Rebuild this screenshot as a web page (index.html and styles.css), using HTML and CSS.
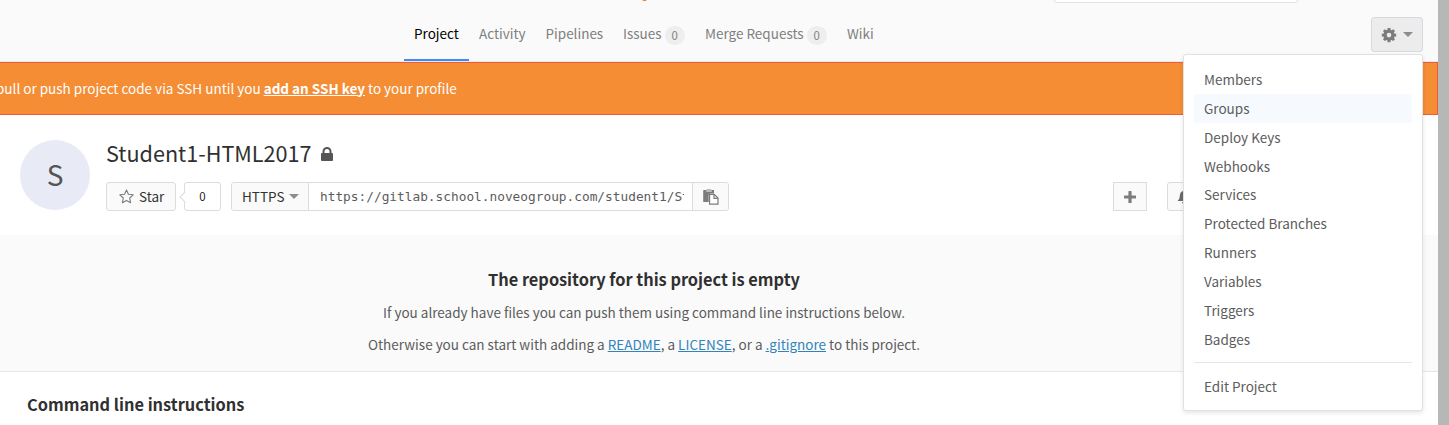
FILE: index.html
```
<!DOCTYPE html>
<html lang="en">
<head>
<meta charset="utf-8">
<title>Student1-HTML2017</title>
<link rel="stylesheet" href="styles.css">
</head>
<body>
<div class="page">
  <header class="header">
    <div class="search"></div>
    <div class="logo-tip"></div>
    <nav class="tabs">
      <a class="tab tab-project active">Project</a>
      <a class="tab tab-activity">Activity</a>
      <a class="tab tab-pipelines">Pipelines</a>
      <a class="tab tab-issues">Issues <span class="badge">0</span></a>
      <a class="tab tab-merge">Merge Requests <span class="badge">0</span></a>
      <a class="tab tab-wiki">Wiki</a>
    </nav>
    <div class="settings">
      <button class="gear-btn">
        <svg width="16" height="16" viewBox="0 0 16 16"><path fill="#7c7c7c" fill-rule="evenodd" d="M6.6 1h2.8l.3 1.9.9.4 1.6-1.1 1.8 1.8-1.1 1.6.4.9 1.9.3v2.6l-1.9.3-.4.9 1.1 1.6-1.8 1.8-1.6-1.1-.9.4-.3 1.9H6.6l-.3-1.9-.9-.4L3.800 14 2 12.200l1.100-1.600-.4-.9L.8 9.400V6.800l1.900-.3.4-.9L2 4l1.800-1.800 1.600 1.100.9-.4zM8 5.800a2.300 2.300 0 1 0 0 4.600 2.300 2.300 0 0 0 0-4.600z"/></svg>
        <span class="caret"></span>
      </button>
      <ul class="menu">
        <li>Members</li>
        <li class="hover">Groups</li>
        <li>Deploy Keys</li>
        <li>Webhooks</li>
        <li>Services</li>
        <li>Protected Branches</li>
        <li>Runners</li>
        <li>Variables</li>
        <li>Triggers</li>
        <li>Badges</li>
        <li class="divider"></li>
        <li>Edit Project</li>
      </ul>
    </div>
  </header>
  <div class="alert"><span class="alert-text">pull or push project code via SSH until you <a>add an SSH key</a> to your profile</span></div>
  <section class="project">
    <div class="avatar">S</div>
    <div class="info">
      <h1 class="title"><span>Student1-HTML2017</span>
        <svg width="12" height="14" viewBox="0 0 12 14"><path fill="#555" fill-rule="evenodd" d="M1.500 6V4.500a4.500 4.500 0 0 1 9 0V6h.6q.9 0 .9.9v6.200q0 .9-.9.9H.9q-.9 0-.9-.9V6.900Q0 6 .9 6zm2 0h5V4.500a2.500 2.500 0 0 0-5 0z"/></svg>
      </h1>
      <div class="controls">
        <button class="btn star"><svg width="15" height="15" viewBox="0 0 15 15"><path fill="none" stroke="#7c7c7c" stroke-width="1.1" stroke-linejoin="round" d="M7.500 1l1.900 4.300 4.800.5-3.500 3.200.9 4.700-4.100-2.300-4.100 2.300.9-4.700L.8 5.800l4.800-.5z"/></svg><span>Star</span></button>
        <span class="count">0</span>
        <div class="clone">
          <button class="protocol"><span>HTTPS</span><span class="caret dark"></span></button>
          <div class="url"><span>https://gitlab.school.noveogroup.com/student1/Student1-HTML2017.git</span></div>
          <button class="copy"><svg width="16" height="16" viewBox="0 0 16 16"><path fill="#7c7c7c" d="M.8 1h2.700V.5h4.800V1H11v3.600H7.200q-1.500 0-1.500 1.500V13H.8q-.6 0-.6-.6V1.600Q.2 1 .8 1z"/><path fill="#fafafa" d="M3.200 1.600h5.600v.9H3.200z"/><path fill="#fff" stroke="#7c7c7c" stroke-width="1.2" d="M6.600 5.400h4.500L15 9.100v6.100H6.600z"/><path fill="none" stroke="#7c7c7c" stroke-width="1.2" d="M11 5.500v3.800h4"/></svg></button>
        </div>
        <button class="plus"><svg width="12" height="12" viewBox="0 0 12 12"><path fill="#7c7c7c" d="M5 0h2q.6 0 .6.6v3.800h3.800q.6 0 .6.6v2q0 .6-.6.6H7.600v3.800q0 .6-.6.6H5q-.6 0-.6-.6V7.600H.6Q0 7.600 0 7V5q0-.6.6-.6h3.800V.6Q4.400 0 5 0z"/></svg></button>
        <button class="btn bell"><svg width="14" height="14" viewBox="0 0 14 14"><path fill="#6b6b6b" d="M7 0l.8 1.100Q11 2 11.100 5.500q.2 3.800 2.400 5.500H.5q2.200-1.700 2.400-5.500Q3 2 6.200 1.100zM5 12h4q-.5 2-2 2t-2-2z"/></svg></button>
      </div>
    </div>
  </section>
  <section class="empty">
    <h2><span>The repository for this project is empty</span></h2>
    <p>If you already have files you can push them using command line instructions below.</p>
    <p>Otherwise you can start with adding a <a>README</a>, a <a>LICENSE</a>, or a <a>.gitignore</a> to this project.</p>
  </section>
  <section class="commands"><h2><span>Command line instructions</span></h2></section>
</div>
</body>
</html>
```
FILE: styles.css
```
* { box-sizing: border-box; }
body {
  margin: 0;
  height: 425px;
  overflow: hidden;
  background: #b7b7b7;
  color: #5c5c5c;
  font: 13.5px/20px "Noto Sans CJK SC", "Open Sans", sans-serif;
}
button { font: inherit; margin: 0; padding: 0; color: #333; background: #fafafa; border: 1px solid #dcdcdc; display: flex; align-items: center; }
h1, h2, p, ul { margin: 0; padding: 0; font-weight: normal; }
svg { display: block; flex: none; }
span { white-space: nowrap; }
.page { width: 1438px; height: 425px; overflow: hidden; background: #fff; }

.header { position: relative; height: 62px; background: #fafafa; border-bottom: 1px solid #e5e9ec; padding-left: 404px; }
.search { position: absolute; left: 1054px; top: -20px; width: 244px; height: 23px; background: #fff; border: 1px solid #e3e3e3; border-radius: 3px; }
.logo-tip { position: absolute; left: 642px; top: -3px; width: 5px; height: 4px; background: #fc6d26; border-radius: 50%; }
.tabs { display: flex; height: 61px; }
.tab { display: flex; align-items: center; gap: 3px; padding: 4px 10px 0; color: #7f7f7f; white-space: nowrap; }
.tab-project { width: 65px; }
.tab-activity { width: 66.5px; }
.tab-pipelines { width: 77.5px; }
.tab-issues { width: 82px; }
.tab-merge { width: 142px; }
.active { color: #000; border-bottom: 2px solid #4688f1; padding-top: 6px; }
.badge { width: 20px; height: 19px; margin-top: 6px; border-radius: 10px; background: #eee; font-size: 11.4px; line-height: 18px; text-align: center; color: #7f7f7f; }
.caret { border: 5px solid transparent; border-top-color: #8d8d8d; border-bottom: 0; }
.settings { position: absolute; left: 1371px; top: 17px; z-index: 2; }
.gear-btn { width: 52px; height: 35px; padding-left: 9px; gap: 6px; background: #ececec; border-color: #d6d9e0; border-radius: 3px; }
.menu { position: absolute; right: 0; top: 37px; width: 240px; height: 357px; padding: 10.1px 10px; list-style: none; background: #fff; border: 1px solid #e1e1e1; border-radius: 3px; box-shadow: 0 2px 4px rgba(0,0,0,.1); }
.menu li { height: 28.85px; line-height: 28.85px; padding-left: 10px; border-radius: 2px; }
.menu .hover { background: #f6faff; }
.menu .divider { height: 1px; margin: 8.5px 0 8.5px; background: #e5e5e5; }

.alert { height: 53px; background: #f48d34; border: 1px solid #ec5b3b; border-left: 0; color: #fff; display: flex; align-items: center; overflow: hidden; }
.alert-text { margin: 0 0 2px -4px; }
.alert a { font-weight: bold; text-decoration: underline; }

.project { height: 120px; padding: 25px 20px 0; display: flex; gap: 16px; }
.avatar { width: 70px; height: 70px; border-radius: 50%; background: #e8eaf6; color: #555; font-size: 28px; line-height: 69px; text-align: center; flex: none; }
.info { flex: 1; }
.title { display: flex; align-items: center; gap: 9px; height: 27px; font-size: 21.6px; line-height: 25px; color: #303030; }
.title span { padding-bottom: 3px; }
.controls { display: flex; margin-top: 15px; }
.btn { height: 29px; border-radius: 3px; }
.star { width: 70px; padding-left: 12px; gap: 5px; }
.star span, .protocol span:first-child { padding-bottom: 2px; }
.count { position: relative; width: 37px; height: 29px; margin-left: 8px; border: 1px solid #dcdcdc; border-radius: 3px; font-size: 11.5px; line-height: 27px; text-align: center; color: #222; }
.count::before { content: ""; position: absolute; left: -4px; top: 10px; width: 7px; height: 7px; background: #fff; border: solid #dcdcdc; border-width: 0 0 1px 1px; transform: rotate(45deg); }
.clone { display: flex; width: 498px; height: 29px; margin-left: 10px; border: 1px solid #dcdcdc; border-radius: 3px; overflow: hidden; }
.protocol { width: 77px; padding-left: 10px; gap: 5px; border-width: 0 1px 0 0; }
.url { width: 383px; padding: 0 8px 0 11px; font: 12.8px/27px "DejaVu Sans Mono", monospace; color: #5c5c5c; }
.url span { display: block; overflow: hidden; }
.copy { flex: 1; padding-left: 10px; border-width: 0 0 0 1px; }
.plus { width: 34px; height: 29px; margin-left: 384px; padding-left: 10px; }
.bell { width: 60px; margin-left: 20px; padding-left: 9px; }

.empty { height: 137px; padding: 31px 150px 0 0; background: #fafafa; border-bottom: 1px solid #e7e7e7; text-align: center; }
.empty h2, .commands h2 { font-size: 16.35px; line-height: 26px; font-weight: bold; color: #303030; }
.empty p { margin-top: 9px; line-height: 22px; }
.empty p + p { margin-top: 10px; }
.empty a { color: #3084bb; text-decoration: underline; }
.commands { padding: 19px 27px; }
```
